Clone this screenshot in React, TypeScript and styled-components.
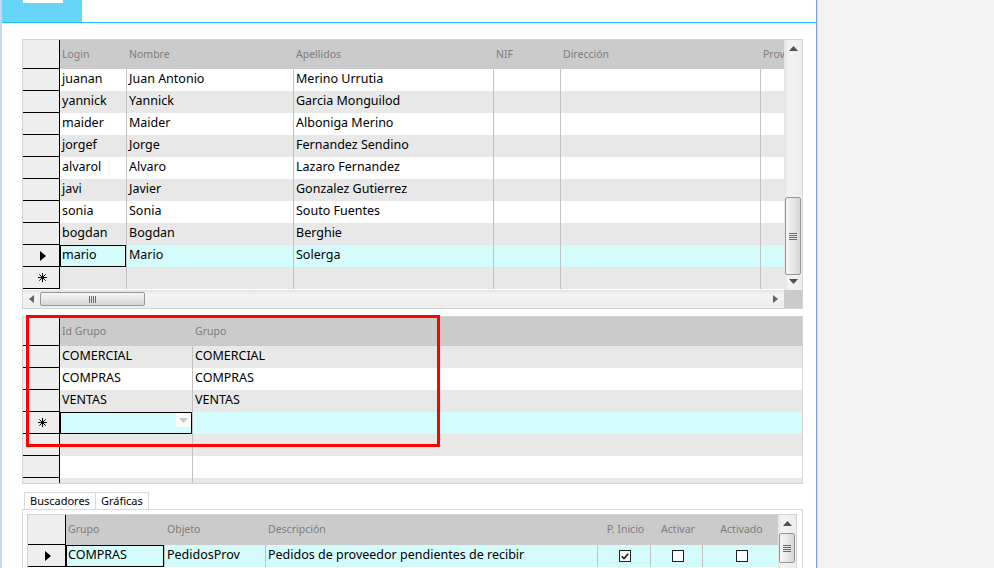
import styled, { createGlobalStyle, css } from "styled-components";

type Tone = "white" | "gray" | "active";

type Col = { label: string; w: number; sep?: boolean; center?: boolean };

type CellValue = string | { check: boolean } | null;

type RowData = {
  cells: CellValue[];
  tone: Tone;
  mark?: "current" | "new";
  focus?: number;
  drop?: boolean;
};

const toneColors: Record<Tone, string> = {
  white: "#ffffff",
  gray: "#e8e8e8",
  active: "#d4fcfc",
};

const GlobalStyle = createGlobalStyle`
  html, body {
    margin: 0;
    padding: 0;
  }

  body {
    width: 994px;
    height: 568px;
    overflow: hidden;
    background: #f3f3f3;
    font-family: "Noto Sans", "Open Sans", sans-serif;
  }
`;

const Screen = styled.div`
  display: flex;
  width: 994px;
  height: 568px;
  overflow: hidden;
`;

const Window = styled.div`
  width: 817px;
  flex: none;
  box-sizing: border-box;
  display: flex;
  flex-direction: column;
  overflow: hidden;
  background: #fff;
  border-left: 2px solid #c8d6ea;
  border-right: 1px solid #7f9fcf;
`;

const Desktop = styled.div`
  flex: 1;
  background: #f3f3f3;
  border-left: 1px solid #dbe5f3;
`;

const TopBar = styled.div`
  height: 23px;
  flex: none;
  box-sizing: border-box;
  border-bottom: 1px solid #1fc6f1;
  display: flex;
`;

const TabChip = styled.div`
  width: 80px;
  height: 22px;
  background: #66d5f7;
  padding-left: 21px;
  box-sizing: border-box;
`;

const ChipMark = styled.div`
  width: 40px;
  height: 3px;
  background: #fff;
`;

const Content = styled.div`
  flex: 1;
  min-height: 0;
  display: flex;
  flex-direction: column;
  padding: 16px 0 0 20px;
`;

const Frame = styled.div<{ $w: number; $h: number; $gap?: number }>`
  position: relative;
  width: ${(p) => p.$w}px;
  height: ${(p) => p.$h}px;
  flex: none;
  margin-top: ${(p) => p.$gap ?? 0}px;
  box-sizing: border-box;
  border: 1px solid #d4d4d4;
  display: flex;
  flex-direction: column;
  background: #fff;
`;

const FrameMain = styled.div`
  flex: 1;
  min-height: 0;
  display: flex;
`;

const FrameFoot = styled.div`
  height: 18px;
  flex: none;
  display: flex;
`;

const Corner = styled.div`
  width: 18px;
  background: #cbcbcb;
`;

const TableArea = styled.div`
  flex: 1;
  min-width: 0;
  overflow: hidden;
  display: flex;
  flex-direction: column;
`;

const HeadRow = styled.div<{ $h: number }>`
  height: ${(p) => p.$h}px;
  flex: none;
  display: flex;
  background: #cbcbcb;
`;

const Row = styled.div<{ $tone: Tone }>`
  height: 22px;
  flex: none;
  display: flex;
  background: ${(p) => toneColors[p.$tone]};
`;

const Indicator = styled.div<{ $w: number }>`
  width: ${(p) => p.$w}px;
  flex: none;
  box-sizing: border-box;
  background: #eeeeee;
  border-right: 1px solid #000;
  border-bottom: 1px solid #000;
  display: flex;
  align-items: center;
  justify-content: center;
  padding-left: 3px;
`;

const HeadCell = styled.div<{ $w: number; $center?: boolean }>`
  width: ${(p) => p.$w}px;
  flex: none;
  box-sizing: border-box;
  padding: 0 0 2px 2px;
  display: flex;
  align-items: center;
  justify-content: ${(p) => (p.$center ? "center" : "flex-start")};
  font-size: 10.5px;
  color: #7d7d7d;
  white-space: nowrap;
  overflow: hidden;
`;

const Cell = styled.div<{ $w: number; $sep: boolean; $focus: boolean; $center?: boolean }>`
  width: ${(p) => p.$w}px;
  flex: none;
  box-sizing: border-box;
  padding-left: 2px;
  display: flex;
  align-items: center;
  justify-content: ${(p) => (p.$center ? "center" : "space-between")};
  font-size: 12.5px;
  color: #000;
  white-space: nowrap;
  overflow: hidden;
  border-right: ${(p) => (p.$sep ? "1px solid #c2c2c2" : "none")};

  & > span {
    padding-bottom: 4px;
  }

  ${(p) =>
    p.$focus &&
    css`
      box-shadow: inset 0 0 0 1px #000;
      align-items: stretch;
      & > span {
        display: flex;
        align-items: center;
      }
    `}
`;

const DropButton = styled.div`
  width: 15px;
  height: 14px;
  margin: 1px 1px 0 0;
  background: #fbfbfb;
  display: flex;
  align-items: center;
  justify-content: center;
`;

const CheckBox = styled.div`
  width: 12px;
  height: 12px;
  box-sizing: border-box;
  border: 1px solid #1e1e1e;
  background: #fff;
  display: flex;
  align-items: center;
  justify-content: center;
`;

const VBar = styled.div`
  width: 18px;
  flex: none;
  display: flex;
  flex-direction: column;
  background: linear-gradient(to right, #e4e4e4, #f3f3f3 25%, #ededed);
`;

const HBar = styled.div`
  flex: 1;
  display: flex;
  background: linear-gradient(to bottom, #e4e4e4, #f3f3f3 25%, #ededed);
`;

const BarButton = styled.div<{ $horizontal?: boolean }>`
  flex: none;
  width: ${(p) => (p.$horizontal ? "17px" : "auto")};
  height: ${(p) => (p.$horizontal ? "auto" : "17px")};
  display: flex;
  align-items: center;
  justify-content: center;
`;

const Track = styled.div<{ $horizontal?: boolean }>`
  flex: 1;
  min-width: 0;
  min-height: 0;
  display: flex;
  flex-direction: ${(p) => (p.$horizontal ? "row" : "column")};
`;

const Thumb = styled.div<{ $horizontal?: boolean; $offset: number; $size: number }>`
  flex: none;
  box-sizing: border-box;
  border: 1px solid #979797;
  border-radius: 2px;
  display: flex;
  align-items: center;
  justify-content: center;
  ${(p) =>
    p.$horizontal
      ? css`
          width: ${p.$size}px;
          height: 14px;
          margin: 2px 0 0 ${p.$offset}px;
          background: linear-gradient(to bottom, #f6f6f6, #e8e8e8 50%, #d5d5d5);
        `
      : css`
          height: ${p.$size}px;
          width: 16px;
          margin: ${p.$offset}px 0 0 1px;
          background: linear-gradient(to right, #f6f6f6, #e8e8e8 50%, #d5d5d5);
        `}
`;

const Spacer = styled.div`
  flex: 1;
`;

const TabStrip = styled.div`
  display: flex;
  margin: 8px 0 0 2px;
  height: 17px;
  flex: none;
`;

const Tab = styled.div`
  box-sizing: border-box;
  height: 17px;
  padding: 0 5px;
  border: 1px solid #d9d9d9;
  border-bottom: none;
  background: #fff;
  font-size: 11px;
  line-height: 16px;
  color: #000;

  & + & {
    border-left: none;
  }
`;

const TabPanel = styled.div`
  width: 781px;
  flex: 1;
  box-sizing: border-box;
  border: 1px solid #d9d9d9;
  border-bottom: none;
  padding: 4px 0 0 4px;
`;

const Highlight = styled.div`
  position: absolute;
  left: 3px;
  top: -2px;
  width: 414px;
  height: 132px;
  box-sizing: border-box;
  border: 3px solid #ff0000;
  pointer-events: none;
`;

function Arrow({ dir, color = "#4b5159" }: { dir: "up" | "down" | "left" | "right"; color?: string }) {
  const vertical = dir === "up" || dir === "down";
  const points = {
    up: "0,5 9,5 4.5,0",
    down: "0,0 9,0 4.5,5",
    left: "5,0 5,8 0,4",
    right: "0,0 0,8 5,4",
  }[dir];
  return (
    <svg width={vertical ? 9 : 5} height={vertical ? 5 : 8} viewBox={vertical ? "0 0 9 5" : "0 0 5 8"}>
      <polygon points={points} fill={color} />
    </svg>
  );
}

function Grip({ horizontal }: { horizontal?: boolean }) {
  const lines = [0, 2, 4, 6];
  return horizontal ? (
    <svg width="7" height="7" viewBox="0 0 7 7">
      {lines.map((x) => (
        <rect key={x} x={x} y={0} width={1} height={7} fill="#6c6c6c" />
      ))}
    </svg>
  ) : (
    <svg width="8" height="7" viewBox="0 0 8 7">
      {lines.map((y) => (
        <rect key={y} x={0} y={y} width={8} height={1} fill="#6c6c6c" />
      ))}
    </svg>
  );
}

function Pointer() {
  return (
    <svg width="6" height="10" viewBox="0 0 6 10">
      <polygon points="0,0 6,5 0,10" fill="#000" />
    </svg>
  );
}

function Star() {
  return (
    <svg width="9" height="9" viewBox="0 0 9 9">
      <g stroke="#000" strokeWidth="1">
        <line x1="4.5" y1="0" x2="4.5" y2="9" />
        <line x1="0" y1="4.5" x2="9" y2="4.5" />
        <line x1="1.3" y1="1.3" x2="7.7" y2="7.7" />
        <line x1="7.7" y1="1.3" x2="1.3" y2="7.7" />
      </g>
    </svg>
  );
}

function Tick() {
  return (
    <svg width="8" height="7" viewBox="0 0 8 7">
      <polyline points="0.8,3.2 3,5.6 7.2,0.8" fill="none" stroke="#1a1a1a" strokeWidth="1.6" />
    </svg>
  );
}

function VScroll({ offset, size }: { offset: number; size: number }) {
  return (
    <VBar>
      <BarButton>
        <Arrow dir="up" />
      </BarButton>
      <Track>
        <Thumb $offset={offset} $size={size}>
          <Grip />
        </Thumb>
        <Spacer />
      </Track>
      <BarButton>
        <Arrow dir="down" />
      </BarButton>
    </VBar>
  );
}

function HScroll({ offset, size }: { offset: number; size: number }) {
  return (
    <HBar>
      <BarButton $horizontal>
        <Arrow dir="left" color="#5b6370" />
      </BarButton>
      <Track $horizontal>
        <Thumb $horizontal $offset={offset} $size={size}>
          <Grip horizontal />
        </Thumb>
        <Spacer />
      </Track>
      <BarButton $horizontal>
        <Arrow dir="right" color="#5b6370" />
      </BarButton>
    </HBar>
  );
}

function Table({ cols, rows, indW, headH }: { cols: Col[]; rows: RowData[]; indW: number; headH: number }) {
  return (
    <TableArea>
      <HeadRow $h={headH}>
        <Indicator $w={indW} />
        {cols.map((c) => (
          <HeadCell key={c.label} $w={c.w} $center={c.center}>
            {c.label}
          </HeadCell>
        ))}
      </HeadRow>
      {rows.map((r, i) => (
        <Row key={i} $tone={r.tone}>
          <Indicator $w={indW}>
            {r.mark === "current" ? <Pointer /> : r.mark === "new" ? <Star /> : null}
          </Indicator>
          {cols.map((c, j) => {
            const v = r.cells[j];
            const focus = r.focus === j;
            return (
              <Cell key={j} $w={c.w} $sep={c.sep !== false} $focus={focus} $center={c.center}>
                {v && typeof v === "object" ? (
                  <CheckBox>{v.check ? <Tick /> : null}</CheckBox>
                ) : (
                  <span>{v}</span>
                )}
                {focus && r.drop ? (
                  <DropButton>
                    <Arrow dir="down" color="#c6c6c6" />
                  </DropButton>
                ) : null}
              </Cell>
            );
          })}
        </Row>
      ))}
    </TableArea>
  );
}

const userCols: Col[] = [
  { label: "Login", w: 67 },
  { label: "Nombre", w: 167 },
  { label: "Apellidos", w: 200 },
  { label: "NIF", w: 67 },
  { label: "Dirección", w: 200 },
  { label: "Prov", w: 120 },
];

const users: [string, string, string][] = [
  ["juanan", "Juan Antonio", "Merino Urrutia"],
  ["yannick", "Yannick", "Garcia Monguilod"],
  ["maider", "Maider", "Alboniga Merino"],
  ["jorgef", "Jorge", "Fernandez Sendino"],
  ["alvarol", "Alvaro", "Lazaro Fernandez"],
  ["javi", "Javier", "Gonzalez Gutierrez"],
  ["sonia", "Sonia", "Souto Fuentes"],
  ["bogdan", "Bogdan", "Berghie"],
];

const userRows: RowData[] = [
  ...users.map(
    (u, i): RowData => ({ cells: [u[0], u[1], u[2], "", "", ""], tone: i % 2 ? "gray" : "white" })
  ),
  { cells: ["mario", "Mario", "Solerga", "", "", ""], tone: "active", mark: "current", focus: 0 },
  { cells: ["", "", "", "", "", ""], tone: "gray", mark: "new" },
];

const groupCols: Col[] = [
  { label: "Id Grupo", w: 133 },
  { label: "Grupo", w: 609, sep: false },
];

const groupRows: RowData[] = [
  { cells: ["COMERCIAL", "COMERCIAL"], tone: "gray" },
  { cells: ["COMPRAS", "COMPRAS"], tone: "white" },
  { cells: ["VENTAS", "VENTAS"], tone: "gray" },
  { cells: ["", ""], tone: "active", mark: "new", focus: 0, drop: true },
  { cells: ["", ""], tone: "gray" },
  { cells: ["", ""], tone: "white" },
  { cells: ["", ""], tone: "gray" },
];

const finderCols: Col[] = [
  { label: "Grupo", w: 99 },
  { label: "Objeto", w: 101 },
  { label: "Descripción", w: 332 },
  { label: "P. Inicio", w: 53, center: true },
  { label: "Activar", w: 52, center: true },
  { label: "Activado", w: 75, center: true, sep: false },
];

const finderRows: RowData[] = [
  {
    cells: [
      "COMPRAS",
      "PedidosProv",
      "Pedidos de proveedor pendientes de recibir",
      { check: true },
      { check: false },
      { check: false },
    ],
    tone: "active",
    mark: "current",
    focus: 0,
  },
];

export default function App() {
  return (
    <>
      <GlobalStyle />
      <Screen>
        <Window>
          <TopBar>
            <TabChip>
              <ChipMark />
            </TabChip>
          </TopBar>
          <Content>
            <Frame $w={781} $h={270}>
              <FrameMain>
                <Table cols={userCols} rows={userRows} indW={37} headH={29} />
                <VScroll offset={140} size={78} />
              </FrameMain>
              <FrameFoot>
                <HScroll offset={0} size={105} />
                <Corner />
              </FrameFoot>
            </Frame>

            <Frame $w={781} $h={168} $gap={7}>
              <FrameMain>
                <Table cols={groupCols} rows={groupRows} indW={37} headH={29} />
              </FrameMain>
              <Highlight />
            </Frame>

            <TabStrip>
              <Tab>Buscadores</Tab>
              <Tab>Gráficas</Tab>
            </TabStrip>
            <TabPanel>
              <Frame $w={770} $h={120}>
                <FrameMain>
                  <Table cols={finderCols} rows={finderRows} indW={38} headH={30} />
                  <VScroll offset={1} size={30} />
                </FrameMain>
              </Frame>
            </TabPanel>
          </Content>
        </Window>
        <Desktop />
      </Screen>
    </>
  );
}
